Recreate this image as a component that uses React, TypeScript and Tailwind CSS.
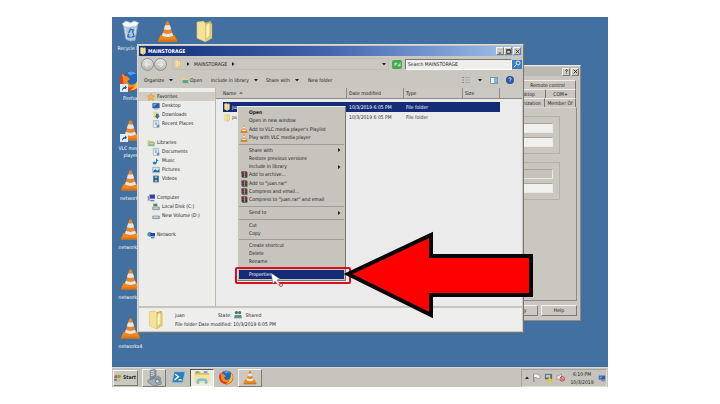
import type { ReactNode } from 'react';

type IconProps = { className?: string };

function Vlc({ className = 'size-2' }: IconProps) {
  return (
    <svg viewBox="0 0 24 26" className={`shrink-0 ${className}`} aria-hidden="true">
      <path d="M4 17h16l3 7H1z" fill="#ee8c1e" stroke="#c76b10" strokeWidth=".6" />
      <path d="M10.5 2Q12 .8 13.500 2L19 20Q12 23.500 5 20z" fill="#ef8420" />
      <path d="M9.200 6h5.600l1.400 4.500Q12 12 7.800 10.500z" fill="#e3e5e6" />
      <path d="M6.700 14.500Q12 17 17.300 14.500l1 3.200Q12 21 5.700 17.700z" fill="#e3e5e6" />
      <path d="M2 22h20l1 2.500H1z" fill="#d97413" />
    </svg>
  );
}

function Folder({ className = 'size-2' }: IconProps) {
  return (
    <svg viewBox="0 0 20 24" className={`shrink-0 ${className}`} aria-hidden="true">
      <path d="M9 3l8-2v18l-6 4z" fill="#cfb455" />
      <path d="M2 2l7-1 2 3v19l-9-4z" fill="#f3e39a" stroke="#cdb458" strokeWidth=".5" />
      <path d="M11 7l7-4v16l-7 4z" fill="#e2cb70" />
      <path d="M12 5l3-2v13l-3 3z" fill="#faf1c0" />
    </svg>
  );
}

function RecycleBin({ className = '' }: IconProps) {
  return (
    <svg viewBox="0 0 20 24" className={`shrink-0 ${className}`} aria-hidden="true">
      <path d="M2 4l16-1-3 19-5 1-5-2z" fill="#aec5da" stroke="#8fa9c2" />
      <path d="M1 4l4-3 5 2 4-2 5 2-3 4-8 1-5-1z" fill="#f4f7fa" stroke="#a9bccd" strokeWidth=".7" />
      <path d="M4 8l2 12M16 8l-2 12" stroke="#dce8f2" />
      <path d="M8 14l2-4 3 1-1 3M13 14l1 4-3 1M10 19l-3-1 1-3" fill="none" stroke="#2c6fb5" strokeWidth="1.500" />
    </svg>
  );
}

function Firefox({ className = '' }: IconProps) {
  return (
    <svg viewBox="0 0 24 24" className={`shrink-0 ${className}`} aria-hidden="true">
      <circle cx="12" cy="12" r="11" fill="#e2401f" />
      <circle cx="12" cy="9" r="8" fill="#1f66bd" />
      <path d="M8 3q5-3 10 1-5 0-7 2z" fill="#4ba3e8" />
      <path d="M2 4l3 2 3 1 3 3-3 2q1 4 5 4 4-1 6-3 0 5-6 6-6 1-9-4z" fill="#f58a1c" />
      <path d="M2 4l1 9q3 9 12 8-8 4-13-3-4-7 0-14z" fill="#e6391f" />
      <path d="M19 4q6 7 1 14-4 5-9 4 9-5 8-18z" fill="#fbc02b" />
    </svg>
  );
}

function Shortcut() {
  return (
    <svg viewBox="0 0 8 8" className="absolute bottom-0 left-0 size-2" aria-hidden="true">
      <path d="M0 0h8v8H0z" fill="#e4ecf3" />
      <path d="M2 7q0-4 3-4V1.500l2 2-2 2V4.500Q3 4.500 2 7z" fill="#22518c" />
    </svg>
  );
}

function Rar() {
  return (
    <svg viewBox="0 0 12 12" className="size-[7px] shrink-0" aria-hidden="true">
      <path d="M1 1h9l1 2v8H2L1 9z" fill="#45323c" />
      <path d="M1 1h9v3H1z" fill="#8b3046" />
      <path d="M2 5h8v2H2z" fill="#31548c" />
      <path d="M2 8h8v3H2z" fill="#2f5a39" />
      <path d="M5 1h2v10H5z" fill="#a58a5c" />
    </svg>
  );
}

function Star() {
  return (
    <svg viewBox="0 0 12 12" className="size-2 shrink-0" aria-hidden="true">
      <path d="M6 0l1.800 4 4.200.4-3.200 2.800 1 4.300L6 9.200l-3.800 2.300 1-4.300L0 4.400 4.200 4z" fill="#f3b64a" stroke="#cf8a2a" strokeWidth=".6" />
    </svg>
  );
}

function Monitor() {
  return (
    <svg viewBox="0 0 12 12" className="size-2 shrink-0" aria-hidden="true">
      <path d="M1 2h10v7H1z" fill="#2a5fb0" stroke="#46628c" strokeWidth=".8" />
      <path d="M2 3h5L3 7H2z" fill="#68a2df" />
      <path d="M3 10h6v1H3z" fill="#7b8c9e" />
    </svg>
  );
}

function Downloads() {
  return (
    <svg viewBox="0 0 12 12" className="size-2 shrink-0" aria-hidden="true">
      <path d="M2 1h6l2 2v8H2z" fill="#ecd886" />
      <path d="M6 4h4v3h2l-4 5-4-5h2z" fill="#2c75b8" />
    </svg>
  );
}

function Page() {
  return (
    <svg viewBox="0 0 12 12" className="size-2 shrink-0" aria-hidden="true">
      <path d="M2 1h8v10H2z" fill="#f6f9fc" stroke="#8ca2b8" />
      <path d="M4 3h4M4 5h4M4 7h3" stroke="#5c86b4" />
      <path d="M7 7h4v4H7z" fill="#6e93bb" />
    </svg>
  );
}

function Library() {
  return (
    <svg viewBox="0 0 12 12" className="size-2 shrink-0" aria-hidden="true">
      <path d="M1 2h4l1 1h4v7H1z" fill="#dcc974" />
      <path d="M3 5h9l-1 6H2z" fill="#7dbb8f" />
      <path d="M4 6h6v2H4z" fill="#b7dccb" />
    </svg>
  );
}

function Music() {
  return (
    <svg viewBox="0 0 12 12" className="size-2 shrink-0" aria-hidden="true">
      <ellipse cx="4" cy="9" rx="3" ry="2.300" fill="#2586bd" />
      <path d="M6 9V1q1 3 4 4-1 2-2.500 1V9z" fill="#2586bd" />
    </svg>
  );
}

function Pictures() {
  return (
    <svg viewBox="0 0 12 12" className="size-2 shrink-0" aria-hidden="true">
      <path d="M1 2h10v8H1z" fill="#cfe4f1" stroke="#7f9fb6" />
      <path d="M2 7l3-2 3 2 3-2v4H2z" fill="#246e9d" />
    </svg>
  );
}

function Videos() {
  return (
    <svg viewBox="0 0 12 12" className="size-2 shrink-0" aria-hidden="true">
      <path d="M2 1h8v10H2z" fill="#1f5070" />
      <path d="M4 2h4v3H4zM4 7h4v3H4z" fill="#8fc3dc" />
    </svg>
  );
}

function Computer() {
  return (
    <svg viewBox="0 0 12 12" className="size-2 shrink-0" aria-hidden="true">
      <path d="M4 1h8v6H4z" fill="#2c43a4" stroke="#6e7fbb" strokeWidth=".7" />
      <path d="M1 3h3v7H1z" fill="#8b96b8" />
      <path d="M5 9h6v2H5z" fill="#7581a4" />
    </svg>
  );
}

function Disk({ system = false }: { system?: boolean }) {
  return (
    <svg viewBox="0 0 12 12" className="size-2 shrink-0" aria-hidden="true">
      <path d="M1 6h10v4H1z" fill="#aab3b8" stroke="#626d73" strokeWidth=".7" />
      <path d="M2 7h7v1H2z" fill="#eef2f4" />
      {system && <path d="M2 1h6v4H2z" fill="#4b8a57" />}
    </svg>
  );
}

function Network() {
  return (
    <svg viewBox="0 0 12 12" className="size-2 shrink-0" aria-hidden="true">
      <circle cx="4" cy="5" r="3.500" fill="#3b9aa8" />
      <path d="M5 3h7v5H5z" fill="#2446ad" />
      <path d="M6 9h5v2H6z" fill="#5c7cae" />
    </svg>
  );
}

function Server() {
  return (
    <svg viewBox="0 0 18 18" className="size-[17px]" aria-hidden="true">
      <path d="M4 1l5-1 2 1v11l-6 2-1-1z" fill="#7d8a91" />
      <path d="M5 3l4-1M5 5l4-1M5 7l4-1" stroke="#dfe7ea" />
      <path d="M2 12l7-2 7 3v3l-7 2-7-4z" fill="#a5b0b5" stroke="#65727a" strokeWidth=".7" />
      <path d="M9 9l4-2 3 2v4l-4 2-3-2z" fill="#8d989d" />
      <circle cx="12" cy="13" r="2" fill="#d5dadd" stroke="#6a767d" />
    </svg>
  );
}

function PowerShell() {
  return (
    <svg viewBox="0 0 18 16" className="h-[13px] w-[15px]" aria-hidden="true">
      <path d="M4 1h13l-3 13H1z" fill="#2a7fb7" stroke="#9cc7e1" strokeWidth=".7" />
      <path d="M5 4l4 3-5 4M9 11h4" fill="none" stroke="#fff" strokeWidth="1.600" />
    </svg>
  );
}

function ExplorerIcon() {
  return (
    <svg viewBox="0 0 20 16" className="h-[15px] w-[18px]" aria-hidden="true">
      <path d="M2 2h6l1 1h9v11H2z" fill="#dcc05e" />
      <path d="M3 1h4v2H3z" fill="#75b46f" />
      <path d="M12 1h4v2h-4z" fill="#6ba0c5" />
      <path d="M1 5h18l-1 9H2z" fill="#f5e39a" />
      <path d="M4 15v-3q0-3 3-3h6q3 0 3 3v3h-3v-3H7v3z" fill="#7ebbdc" />
    </svg>
  );
}

const bevel = 'border border-t-[#f4f3ef] border-l-[#f4f3ef] border-r-[#7c7b76] border-b-[#7c7b76] bg-[#cac8c0]';
const field = 'h-[10px] border border-t-[#a5a39c] border-l-[#a5a39c] border-r-[#e9e8e2] border-b-[#e9e8e2]';

function Caption({ name, children }: { name: string; children: ReactNode }) {
  return (
    <button aria-label={name} className={`flex h-2 w-[8px] items-center justify-center ${bevel}`}>
      <svg viewBox="0 0 8 8" className="size-[5px]" fill="none" stroke="#222" strokeWidth="1.300" aria-hidden="true">
        {children}
      </svg>
    </button>
  );
}

const questionMark = <path d="M2.500 2.500Q2.500 1 4 1t1.500 1.500Q5.500 3.500 4 4v1M4 6v1" />;
const cross = <path d="M1 1l6 6M7 1L1 7" />;

function Caret({ className = '' }: IconProps) {
  return (
    <svg viewBox="0 0 8 8" className={`size-1 shrink-0 ${className}`} aria-hidden="true">
      <path d="M0 2h8L4 7z" fill="#222" />
    </svg>
  );
}

const desktopItems = [
  { label: 'Recycle Bin', icon: <RecycleBin className="h-[22px] w-[19px]" /> },
  { label: 'Firefox', icon: <Firefox className="size-[22px]" />, shortcut: true },
  { label: 'VLC media player', icon: <Vlc className="h-[23px] w-[21px]" />, shortcut: true },
  { label: 'networkx', icon: <Vlc className="h-[23px] w-[21px]" /> },
  { label: 'networkx2', icon: <Vlc className="h-[23px] w-[21px]" /> },
  { label: 'networkx3', icon: <Vlc className="h-[23px] w-[21px]" /> },
  { label: 'networkx4', icon: <Vlc className="h-[23px] w-[21px]" /> },
];

const navGroups = [
  [
    { label: 'Favorites', icon: <Star /> },
    { label: 'Desktop', icon: <Monitor /> },
    { label: 'Downloads', icon: <Downloads /> },
    { label: 'Recent Places', icon: <Page /> },
  ],
  [
    { label: 'Libraries', icon: <Library /> },
    { label: 'Documents', icon: <Page /> },
    { label: 'Music', icon: <Music /> },
    { label: 'Pictures', icon: <Pictures /> },
    { label: 'Videos', icon: <Videos /> },
  ],
  [
    { label: 'Computer', icon: <Computer /> },
    { label: 'Local Disk (C:)', icon: <Disk system /> },
    { label: 'New Volume (D:)', icon: <Disk /> },
  ],
  [{ label: 'Network', icon: <Network /> }],
];

function PropertiesDialog() {
  const tab = 'h-[9px] border-r border-t border-r-[#77756f] border-t-[#efeee9]';
  return (
    <section aria-label="User properties" className="absolute left-[288px] top-[48px] flex h-[256px] w-[181px] flex-col border border-t-[#e9e8e2] border-l-[#e9e8e2] border-r-[#8d8b84] border-b-[#8d8b84] bg-[#c9c7bf] p-px">
      <header className="flex h-[9px] shrink-0 items-center justify-end gap-px bg-[#b9b8b3]">
        <Caption name="Help">{questionMark}</Caption>
        <Caption name="Close dialog">{cross}</Caption>
      </header>
      <div role="tablist" className="mt-1 mr-[3px] text-center">
        <div className="flex justify-end"><button role="tab" className={`${tab} w-[56px]`}>Remote control</button></div>
        <div className="flex justify-end">
          <button role="tab" className={`${tab} w-10`}>Desktop</button>
          <button role="tab" className={`${tab} w-[30px]`}>COM+</button>
        </div>
        <div className="flex justify-end">
          <button role="tab" className={`${tab} w-10 pl-1`}>Organization</button>
          <button role="tab" className={`${tab} w-[31px]`}>Member Of</button>
        </div>
      </div>
      <div className="mr-[2px] flex flex-1 flex-col gap-2 border border-t-[#d9d8d2] border-l-[#efeee9] border-r-[#8d8b84] border-b-[#8d8b84] pt-2 pr-4">
        <fieldset className="flex flex-col gap-1 border border-[#b3b1aa] py-[6px] pr-[6px]">
          <input aria-label="User name" className={`${field} bg-[#f0f0ee]`} />
          <input aria-label="Domain" className={`${field} bg-[#f0f0ee]`} />
        </fieldset>
        <fieldset className="flex flex-col gap-1 border border-[#b3b1aa] py-[6px] pr-[6px]">
          <input aria-label="Profile path" disabled className={`${field} bg-[#c5c3bb]`} />
          <input aria-label="Local path" className={`${field} bg-[#f0f0ee]`} />
        </fieldset>
      </div>
      <footer className="mt-1 mr-[2px] mb-[3px] flex justify-end gap-[3px]">
        <button className={`h-[11px] w-9 ${bevel}`}>Apply</button>
        <button className={`h-[11px] w-9 ${bevel}`}>Help</button>
      </footer>
    </section>
  );
}

function ExplorerWindow() {
  return (
    <section aria-label="MAINSTORAGE" className="absolute left-[25px] top-[27px] flex h-[289px] w-[387px] flex-col border border-t-[#d5d9e2] border-l-[#d5d9e2] border-r-[#77756f] border-b-[#77756f] bg-[#c9c7bf] p-px">
      <header className="flex h-[10px] shrink-0 items-center gap-px bg-linear-to-r from-[#102c78] via-[#4765ad] to-[#a2c5ec] pr-px text-white">
        <Folder />
        <h1 className="flex-1 font-bold">MAINSTORAGE</h1>
        <div className="flex">
          <Caption name="Minimize"><path d="M1 6.500h4" /></Caption>
          <Caption name="Maximize"><path d="M1 1h6v6H1zM1 2h6" /></Caption>
        </div>
        <Caption name="Close">{cross}</Caption>
      </header>
      <div className="flex h-4 shrink-0 items-center pl-[2px]">
        {['Back', 'Forward'].map((name) => (
          <button key={name} aria-label={name} className="flex size-[13px] items-center justify-center rounded-full border border-[#92918c] bg-linear-to-b from-[#e5e5e2] to-[#b8b7b2]">
            <svg viewBox="0 0 8 8" className={`size-[7px] ${name === 'Forward' ? 'rotate-180' : ''}`} fill="none" stroke="#e6e6e3" strokeWidth="1.500" aria-hidden="true">
              <path d="M7 4H1M4 1L1 4l3 3" />
            </svg>
          </button>
        ))}
        <div className="ml-[5px] flex h-3 flex-1 items-center gap-1 border border-[#bfbdb5] pl-px">
          <Folder />
          <Caret className="-rotate-90" />
          <span>MAINSTORAGE</span>
          <Caret className="-rotate-90" />
          <button aria-label="Previous locations" className="ml-auto flex p-1 pr-[2px]"><Caret /></button>
        </div>
        <button aria-label="Refresh" className="ml-[3px] flex h-[9px] w-[10px] items-center justify-center rounded-xs bg-[#45a851]">
          <svg viewBox="0 0 10 8" className="h-[7px] w-[9px]" fill="none" stroke="#c4ebc8" aria-hidden="true">
            <path d="M2 6V3h3M3.500 1.500L2 3l1.500 1.500M8 2v3H5M6.500 6.500L8 5 6.500 3.500" />
          </svg>
        </button>
        <input aria-label="Search" placeholder="Search MAINSTORAGE" className="ml-[3px] h-[11px] w-[107px] border border-t-[#77756f] border-l-[#77756f] border-r-white border-b-white bg-[#eeeeec] pl-[2px] placeholder:text-[#222]" />
        <button aria-label="Start search" className="flex h-[9px] w-[10px] items-center justify-center bg-[#3d7fc0]">
          <svg viewBox="0 0 8 8" className="size-2" fill="none" stroke="#d8e8f6" aria-hidden="true"><circle cx="5" cy="3" r="2" /><path d="M3.500 4.500L1 7" /></svg>
        </button>
      </div>
      <div className="flex h-4 shrink-0 items-center px-[5px]">
        <button className="flex w-[37px] items-center gap-[5px]">Organize <Caret /></button>
        <button className="flex w-[30px] items-center gap-px">
          <svg viewBox="0 0 10 10" className="size-2" aria-hidden="true"><path d="M1 2h4l1 1h3v5H1z" fill="#e0d28a" /><path d="M2 5h7v4H2z" fill="#5aa78c" /></svg>
          Open
        </button>
        <button className="flex w-[55px] items-center gap-[5px]">Include in library <Caret /></button>
        <button className="flex w-[42px] items-center gap-[5px]">Share with <Caret /></button>
        <button>New folder</button>
        <div className="ml-auto flex items-center gap-2">
          <button aria-label="Change view" className="flex items-center gap-2">
            <svg viewBox="0 0 8 8" className="size-2" aria-hidden="true"><path d="M0 1.500h2M0 4h2M0 6.500h2" stroke="#888" /><path d="M3 1.500h5M3 4h5M3 6.500h5" stroke="#aaa" /></svg>
            <Caret />
          </button>
          <button aria-label="Preview pane" className="flex h-[7px] w-2 justify-end border border-[#6f9fb5] bg-[#eef4f7]"><span className="h-full w-[3px] bg-[#7db7d2]" /></button>
          <button aria-label="Get help" className="mr-[3px] flex size-[8px] items-center justify-center rounded-full bg-[#2d51a8]">
            <svg viewBox="0 0 8 8" className="size-[6px]" fill="none" stroke="#fff" aria-hidden="true">{questionMark}</svg>
          </button>
        </div>
      </div>
      <div className="flex min-h-0 flex-1">
        <nav className="w-[77px] shrink-0 border-r border-[#b9b8b2] bg-[#ececeb] pt-[4px]">
          {navGroups.map((group) => (
            <ul key={group[0].label} className="mb-[10px]">
              {group.map((item, i) => (
                <li key={item.label} className={item.label === 'Favorites' ? 'bg-[#cfcdc5]' : ''}>
                  <a href="#" className={`flex h-[9px] items-center gap-[2px] ${i === 0 ? 'pl-[8px]' : 'pl-[13px]'}`}>
                    {item.icon}
                    {item.label}
                  </a>
                </li>
              ))}
            </ul>
          ))}
        </nav>
        <div className="flex-1 bg-[#ebebeb]">
          <table className="w-full table-fixed border-separate border-spacing-0 text-left">
            <colgroup>
              <col className="w-[7px]" />
              <col className="w-[124px]" />
              <col className="w-[57px]" />
              <col className="w-[59px]" />
              <col className="w-[37px]" />
              <col />
            </colgroup>
            <thead>
              <tr className="h-[11px] bg-[#cac8c0]">
                <th colSpan={2} className="border-r border-b border-[#8d8b84] pl-[7px] font-normal">
                  Name <Caret className="ml-px inline-block rotate-180 opacity-50" />
                </th>
                <th className="border-r border-b border-[#8d8b84] pl-[2px] font-normal">Date modified</th>
                <th className="border-r border-b border-[#8d8b84] pl-[2px] font-normal">Type</th>
                <th className="border-r border-b border-[#8d8b84] pl-[2px] font-normal">Size</th>
                <th className="border-b border-[#8d8b84]" />
              </tr>
            </thead>
            <tbody>
              <tr className="h-[3px]"><td colSpan={6} /></tr>
              <tr className="h-[10px] text-white">
                <td />
                <td className="bg-[#142c78]"><span className="flex items-center gap-px"><Folder />juan</span></td>
                <td className="bg-[#142c78] pl-[2px]">10/3/2019 6:05 PM</td>
                <td className="bg-[#142c78] pl-[2px]">File folder</td>
                <td className="bg-[#142c78]" />
                <td />
              </tr>
              <tr className="h-[11px] text-[#333]">
                <td />
                <td><span className="flex items-center gap-px"><Folder />public</span></td>
                <td className="pl-[2px]">10/3/2019 6:05 PM</td>
                <td className="pl-[2px]">File folder</td>
                <td />
                <td />
              </tr>
            </tbody>
          </table>
        </div>
      </div>
      <footer className="flex h-[25px] shrink-0 items-center gap-[10px] border-t-2 border-[#c6c5c0] bg-[#eeeeed] pl-2">
        <Folder className="h-5 w-[18px]" />
        <div className="leading-[9px]">
          <div className="flex items-center"><span className="w-[43px]">juan</span><span>State:</span>
            <svg viewBox="0 0 10 10" className="mx-[3px] size-2" aria-hidden="true"><circle cx="3" cy="2" r="2" fill="#4d6f60" /><circle cx="7" cy="2" r="2" fill="#4a7391" /><path d="M0 9l1-4h4v4zM5 9V5h4l1 4z" fill="#5b9480" /></svg>
            <span>Shared</span>
          </div>
          <div>File folder Date modified: 10/3/2019 6:05 PM</div>
        </div>
      </footer>
    </section>
  );
}

type MenuItem = { label: string; icon?: ReactNode; sub?: boolean; strong?: boolean; active?: boolean };

const menuGroups: { height: string; items: MenuItem[] }[] = [
  {
    height: 'h-[34px]',
    items: [
      { label: 'Open', strong: true },
      { label: 'Open in new window' },
      { label: "Add to VLC media player's Playlist", icon: <Vlc /> },
      { label: 'Play with VLC media player', icon: <Vlc /> },
    ],
  },
  {
    height: 'h-[58px]',
    items: [
      { label: 'Share with', sub: true },
      { label: 'Restore previous versions' },
      { label: 'Include in library', sub: true },
      { label: 'Add to archive...', icon: <Rar /> },
      { label: 'Add to "juan.rar"', icon: <Rar /> },
      { label: 'Compress and email...', icon: <Rar /> },
      { label: 'Compress to "juan.rar" and email', icon: <Rar /> },
    ],
  },
  { height: 'h-[9px]', items: [{ label: 'Send to', sub: true }] },
  { height: 'h-4', items: [{ label: 'Cut' }, { label: 'Copy' }] },
  { height: 'h-[25px]', items: [{ label: 'Create shortcut' }, { label: 'Delete' }, { label: 'Rename' }] },
  { height: 'h-[9px]', items: [{ label: 'Properties', active: true }] },
];

function ContextMenu() {
  return (
    <div role="menu" className="absolute left-[125px] top-[89px] w-[109px] border border-t-[#e9e8e2] border-l-[#e9e8e2] border-r-[#77756f] border-b-[#77756f] bg-[#c6c4bc] p-px">
      {menuGroups.map((group, g) => (
        <div key={group.items[0].label}>
          {g > 0 && <div className="flex h-1 items-center"><div className="h-px w-full bg-[#9f9d96]" /></div>}
          <div className={`flex flex-col ${group.height}`}>
            {group.items.map((item) => (
              <button key={item.label} role="menuitem" className={`flex min-h-0 flex-1 items-center text-left ${item.active ? 'bg-[#142c78] text-white' : ''} ${item.strong ? 'font-bold' : ''}`}>
                <span className="flex w-[10px] justify-center">{item.icon}</span>
                <span className="flex-1 whitespace-nowrap">{item.label}</span>
                {item.sub && <Caret className="mr-[3px] -rotate-90" />}
              </button>
            ))}
          </div>
        </div>
      ))}
    </div>
  );
}

function Taskbar() {
  const slot = 'flex h-[18px] w-6 items-center justify-center';
  return (
    <footer className="relative flex h-5 shrink-0 items-center border-t border-[#d6d5cf] bg-[#c5c3bb] pl-px">
      <button className={`flex h-4 w-[25px] items-center gap-px font-bold ${bevel}`}>
        <svg viewBox="0 0 10 10" className="size-2" aria-hidden="true"><path d="M1 2l3-1v4H0z" fill="#d75a35" /><path d="M5 1l4 1-1 3H4z" fill="#70a94a" /><path d="M0 6h4L3 9 0 8z" fill="#4b82c3" /><path d="M5 6h4L8 9H4z" fill="#e6bb3c" /></svg>
        Start
      </button>
      <div className="ml-1 flex">
        <button aria-label="Server Manager" className={`${slot} ${bevel}`}><Server /></button>
        <button aria-label="PowerShell" className={slot}><PowerShell /></button>
        <button aria-label="Windows Explorer" className={`${slot} border border-t-[#55544f] border-l-[#55544f] border-r-white border-b-white bg-[#eceae4]`}><ExplorerIcon /></button>
        <button aria-label="Firefox" className={slot}><Firefox className="size-[15px]" /></button>
        <button aria-label="VLC media player" className={`${slot} ${bevel}`}><Vlc className="h-[15px] w-[14px]" /></button>
      </div>
      <div className="mr-px ml-auto flex h-[18px] items-center gap-[3px] border border-t-[#a5a39c] border-l-[#a5a39c] border-r-[#dddcd6] border-b-[#dddcd6] pl-[3px]">
        <button aria-label="Show hidden icons" className="flex"><Caret className="rotate-180" /></button>
        <svg viewBox="0 0 10 10" className="size-[9px]" aria-hidden="true"><path d="M2 1v9" stroke="#777" /><path d="M2 1h4v1h3v4H5V5H2z" fill="#f6f6f4" stroke="#888" strokeWidth=".7" /></svg>
        <svg viewBox="0 0 10 10" className="size-[9px]" aria-hidden="true"><path d="M1 1h8v6H1z" fill="#5a6b70" /><path d="M2 2h5v3H2z" fill="#b9cbd0" /><path d="M6 4l4 6H3z" fill="#e8ca35" /></svg>
        <svg viewBox="0 0 10 10" className="size-[9px]" aria-hidden="true"><path d="M1 3h2l3-2v8L3 7H1z" fill="#ececec" stroke="#888" strokeWidth=".7" /><circle cx="7" cy="6.500" r="2.500" fill="none" stroke="#cf3b35" /><path d="M5.300 5l3.500 3.200" stroke="#cf3b35" /></svg>
        <time className="ml-px w-[26px] text-center leading-[8px] whitespace-nowrap">6:10 PM<br />10/3/2019</time>
        <svg viewBox="0 0 10 10" className="size-2" aria-hidden="true"><path d="M1 2h8v5H1z" fill="#285cad" /><path d="M2 3h4L3 6H2z" fill="#71a3df" /><path d="M4 8h5v1H4z" fill="#4e6690" /></svg>
      </div>
    </footer>
  );
}

export default function App() {
  return (
    <main className="min-h-screen bg-white px-28 py-[17px] font-['DejaVu_Sans_Condensed','DejaVu_Sans',sans-serif] text-[5px] leading-[7px] text-[#1c1c1c]">
      <div className="relative flex h-[370px] flex-col overflow-hidden bg-[#4170a1]">
        <div className="flex min-h-0 flex-1 text-white">
          <ul className="flex w-[37px] flex-col pt-[3px]">
            {desktopItems.map((item) => (
              <li key={item.label} className="flex min-h-0 flex-1 flex-col items-center gap-[3px] text-center">
                <span className="relative">{item.icon}{item.shortcut && <Shortcut />}</span>
                {item.label}
              </li>
            ))}
          </ul>
          <ul className="flex pt-[3px]">
            <li className="w-[37px]"><Vlc className="mx-auto h-[23px] w-[23px]" /></li>
            <li className="w-[37px]"><Folder className="mx-auto h-[23px] w-[19px]" /></li>
          </ul>
        </div>
        <Taskbar />
        <PropertiesDialog />
        <ExplorerWindow />
        <ContextMenu />
        <div className="absolute left-[123px] top-[250px] h-[17px] w-[116px] rounded-xs border-2 border-[#d80f1d]" />
        <svg viewBox="0 0 190 90" className="absolute left-[232px] top-[212px] h-[90px] w-[190px]" aria-hidden="true">
          <path d="M4 45L87 6v21h100v39H87v20z" fill="#fe0000" stroke="#050505" strokeWidth="4" />
        </svg>
        <svg viewBox="0 0 14 16" className="absolute left-[158px] top-[256px] h-4 w-[14px]" aria-hidden="true">
          <path d="M1 0l9 6-3 1 3 4-2 1-3-4-2 3z" fill="#fff" stroke="#555" strokeWidth=".4" />
          <circle cx="11" cy="12" r="1.500" fill="none" stroke="#a33" strokeWidth=".8" />
        </svg>
      </div>
    </main>
  );
}
